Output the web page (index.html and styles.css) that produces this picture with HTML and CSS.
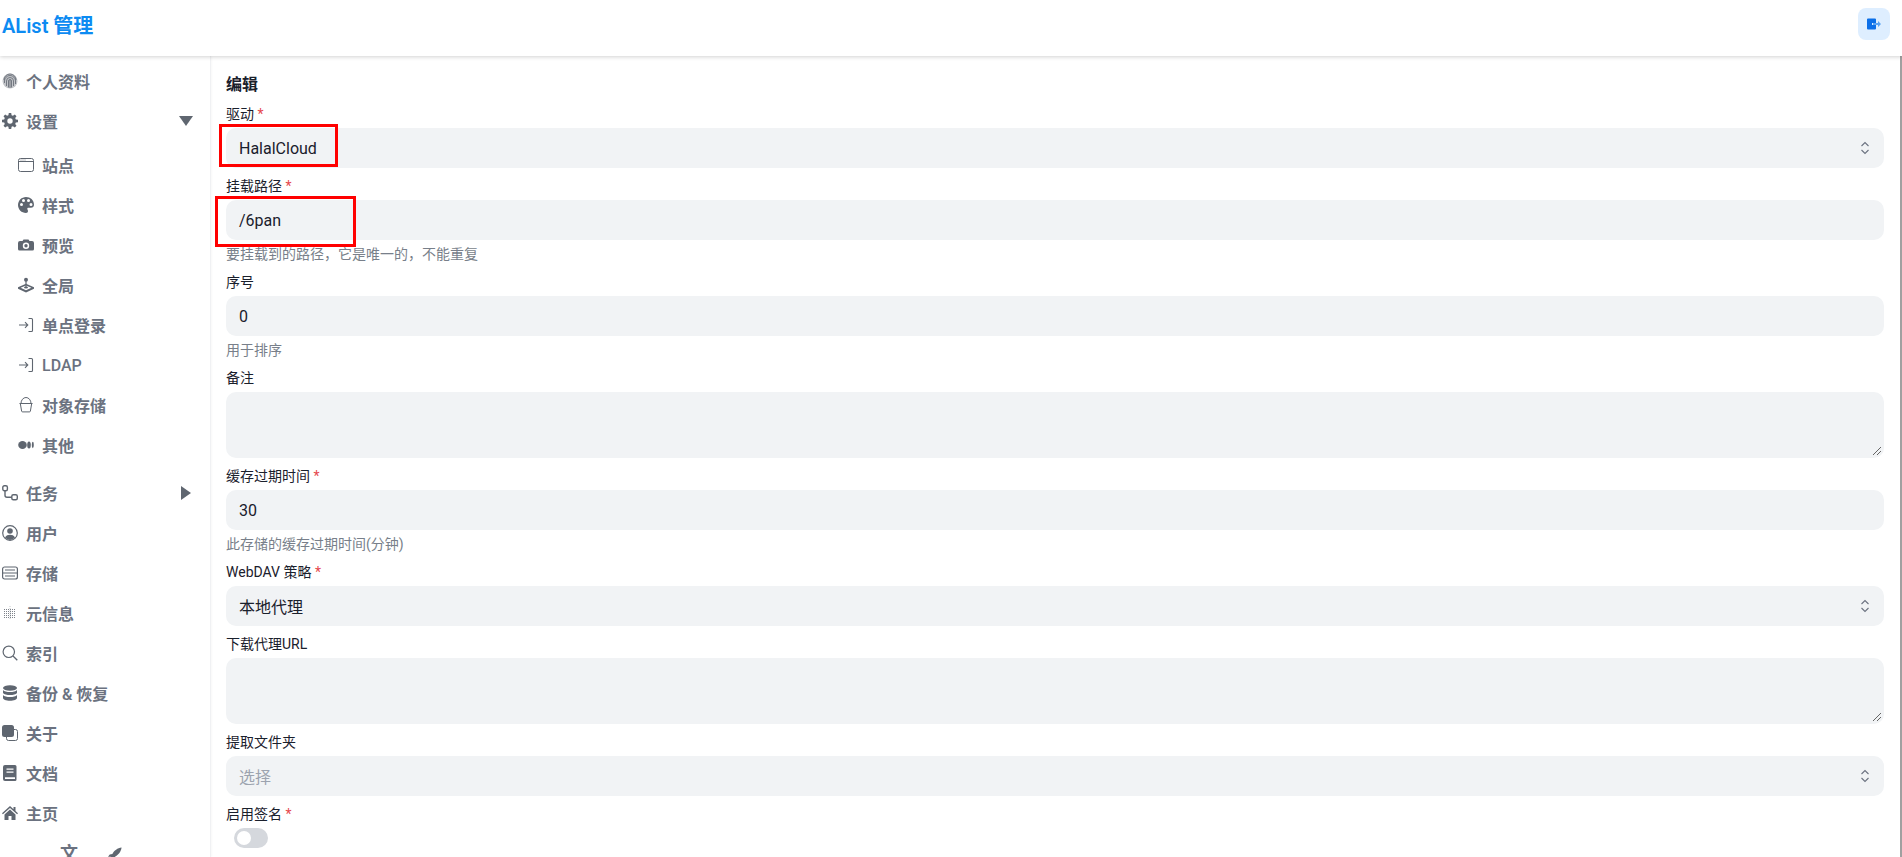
FILE: index.html
```html
<!DOCTYPE html>
<html lang="zh-CN">
<head>
  <meta charset="UTF-8">
  <title>AList 管理</title>
  <link rel="stylesheet" href="styles.css">
</head>
<body>
  <header class="topbar">
    <div class="brand">AList 管理</div>
    <button class="logout" aria-label="退出">
      <svg width="16" height="16" viewBox="0 0 16 16"><path fill="#0b6fe8" d="M2 2.500h7a1 1 0 0 1 1 1V7H6v2h4v3.500a1 1 0 0 1-1 1H2a1 1 0 0 1-1-1v-9a1 1 0 0 1 1-1z"/><path fill="#5ba3f2" d="M7 7h5V5l3 3-3 3V9H7z"/></svg>
    </button>
  </header>

  <div class="layout">
    <!-- Sidebar -->
    <nav class="sidebar">
      <a class="nav-item"><svg class="ico" viewBox="0 0 16 16"><circle cx="8" cy="8" r="7.500" fill="#c3c5c9"/><path d="M2 7a6 6 0 0 1 12 0M2.500 10V8a5.500 5.500 0 0 1 11 0v3M4.500 13V8a3.500 3.500 0 0 1 7 0v5M6.500 14.500V8a1.500 1.500 0 0 1 3 0v6.500M8 7v8" fill="none" stroke="#5f6670" stroke-width=".8"/></svg>个人资料</a>
      <a class="nav-item"><svg class="ico" viewBox="0 0 16 16"><path fill="#5f6670" d="M6.800 0h2.400l.4 2.200 1.300.6L12.800 1.500l1.700 1.700-1.300 1.900.6 1.300 2.200.4v2.400l-2.200.4-.6 1.300 1.300 1.900-1.700 1.700-1.900-1.300-1.300.6-.4 2.200H6.800l-.4-2.200-1.300-.6-1.900 1.300-1.700-1.700 1.300-1.900-.6-1.300L0 9.200V6.800l2.200-.4.6-1.300-1.300-1.900 1.700-1.700 1.900 1.300 1.300-.6zM8 5.300a2.700 2.700 0 1 0 0 5.400 2.700 2.700 0 0 0 0-5.400z"/></svg>设置<svg class="caret" width="14" height="10" viewBox="0 0 14 10"><path fill="#5f6670" d="M0 0h14L7 10z"/></svg></a>

      <div class="subnav">
        <a class="nav-item"><svg class="ico" viewBox="0 0 16 16"><rect x=".5" y="1.500" width="15" height="13" rx="2" fill="none" stroke="#5f6670"/><path d="M1 4.500h14" stroke="#5f6670"/><path d="M2.500 3h1M4.500 3h1M6.500 3h1" stroke="#5f6670" stroke-width=".8"/></svg>站点</a>
        <a class="nav-item"><svg class="ico" viewBox="0 0 16 16"><path fill="#5f6670" fill-rule="evenodd" d="M8 0C3.600 0 0 3.600 0 8s3.600 8 8 8c1.300 0 2-1 2-2 0-.6-.3-1-.5-1.400-.3-.4-.4-.8-.2-1.200.3-.5.800-.6 1.400-.6H13c1.800 0 3-1.300 3-3C16 3 12.400 0 8 0zM3.500 9a1.500 1.500 0 1 1 0-3 1.500 1.500 0 0 1 0 3zm2-4a1.500 1.500 0 1 1 0-3 1.500 1.500 0 0 1 0 3zm5 0a1.500 1.500 0 1 1 0-3 1.500 1.500 0 0 1 0 3zm2.500 4a1.500 1.500 0 1 1 0-3 1.500 1.500 0 0 1 0 3z"/></svg>样式</a>
        <a class="nav-item"><svg class="ico" viewBox="0 0 16 16"><path fill="#5f6670" fill-rule="evenodd" d="M5.500 2.500h5l1 1.500H14a2 2 0 0 1 2 2v6a1.500 1.500 0 0 1-1.500 1.500h-13A1.500 1.500 0 0 1 0 12V6a2 2 0 0 1 2-2h2.500zM8 5.500a3.200 3.200 0 1 0 0 6.400 3.200 3.200 0 0 0 0-6.400zM8 7a1.700 1.700 0 1 1 0 3.400A1.700 1.700 0 0 1 8 7z"/></svg>预览</a>
        <a class="nav-item"><svg class="ico" viewBox="0 0 16 16"><circle cx="8" cy="2.800" r="2" fill="#5f6670"/><path d="M7.400 4h1.200v6H7.400z" fill="#5f6670"/><path fill="#5f6670" fill-rule="evenodd" d="M8 6.800 16 10.300v1.500L8 15.500 0 11.800v-1.500zM8 8.400 2.600 10.800 8 13.300l5.400-2.500z"/><ellipse cx="8" cy="10.500" rx="2" ry="1" fill="#5f6670"/></svg>全局</a>
        <a class="nav-item nav-latin"><svg class="ico" viewBox="0 0 16 16"><path d="M1 8h8.500M7 5.200 9.800 8 7 10.800M10.500 1.500h3a1 1 0 0 1 1 1v11a1 1 0 0 1-1 1h-3" fill="none" stroke="#5f6670" stroke-width="1.100"/></svg><span class="nav-cjk">单点登录</span></a>
        <a class="nav-item nav-latin"><svg class="ico" viewBox="0 0 16 16"><path d="M1 8h8.500M7 5.200 9.800 8 7 10.800M10.500 1.500h3a1 1 0 0 1 1 1v11a1 1 0 0 1-1 1h-3" fill="none" stroke="#5f6670" stroke-width="1.100"/></svg>LDAP</a>
        <a class="nav-item"><svg class="ico" viewBox="0 0 16 16"><path d="M1.500 6.500h13M2.300 6.500 3.600 14a1 1 0 0 0 1 .9h6.800a1 1 0 0 0 1-.9l1.300-7.500M3 6.500a5 6 0 0 1 10 0" fill="none" stroke="#5f6670"/></svg>对象存储</a>
        <a class="nav-item"><svg class="ico" viewBox="0 0 16 16"><ellipse cx="4.500" cy="8" rx="4.300" ry="4" fill="#5f6670"/><ellipse cx="11" cy="8" rx="1.800" ry="3.600" fill="#5f6670"/><ellipse cx="14.800" cy="8" rx="1" ry="3.200" fill="#5f6670"/></svg>其他</a>
      </div>

      <a class="nav-item"><svg class="ico" viewBox="0 0 16 16"><rect x=".8" y=".8" width="4.600" height="5" rx="1.500" fill="none" stroke="#5f6670" stroke-width="1.400"/><rect x="9.800" y="9.800" width="5.500" height="5" rx="1.500" fill="none" stroke="#5f6670" stroke-width="1.400"/><path d="M3 6v4.300a2 2 0 0 0 2 2h4.800" fill="none" stroke="#5f6670" stroke-width="1.400"/></svg>任务<svg class="caret caret-right" width="10" height="14" viewBox="0 0 10 14"><path fill="#5f6670" d="M0 0v14l10-7z"/></svg></a>
      <a class="nav-item"><svg class="ico" viewBox="0 0 16 16"><circle cx="8" cy="8" r="7.300" fill="none" stroke="#5f6670" stroke-width="1.200"/><circle cx="8" cy="6" r="2.800" fill="#5f6670"/><path fill="#5f6670" d="M3 12.500C4 10.500 6 9.800 8 9.800s4 .7 5 2.700A7 7 0 0 1 8 15a7 7 0 0 1-5-2.500z"/></svg>用户</a>
      <a class="nav-item"><svg class="ico" viewBox="0 0 16 16"><rect x=".6" y="2" width="14.800" height="12" rx="2" fill="none" stroke="#5f6670" stroke-width="1.200"/><path d="M1 8h14M3 5h10M3 11h10" stroke="#5f6670" stroke-width="1.100"/></svg>存储</a>
      <a class="nav-item"><svg class="ico" viewBox="0 0 16 16"><path d="M2 4.500h12M2 6.500h12M2 8.500h12M2 10.500h12M2 12.500h12" stroke="#7d828a" stroke-dasharray="1 1"/><path d="M8 1v14" stroke="#c4c7cb" stroke-dasharray="1 1"/></svg>元信息</a>
      <a class="nav-item"><svg class="ico" viewBox="0 0 16 16"><circle cx="6.800" cy="6.800" r="5.700" fill="none" stroke="#5f6670" stroke-width="1.200"/><path d="m11 11 4.300 4.300" stroke="#5f6670" stroke-width="1.300"/></svg>索引</a>
      <a class="nav-item"><svg class="ico" viewBox="0 0 16 16"><ellipse cx="8" cy="3" rx="7" ry="2.800" fill="#5f6670"/><path fill="#5f6670" d="M1 5c1 1.500 4 2 7 2s6-.5 7-2v3c-1 1.500-4 2-7 2S2 9.500 1 8zM1 10c1 1.500 4 2 7 2s6-.5 7-2v3c0 1.500-3 2.800-7 2.800S1 14.500 1 13z"/></svg>备份 &amp; 恢复</a>
      <a class="nav-item"><svg class="ico" viewBox="0 0 16 16"><rect x="4.500" y="4.500" width="11" height="11" rx="2" fill="none" stroke="#5f6670"/><rect x="0" y="0" width="12" height="12" rx="2.500" fill="#5f6670"/></svg>关于</a>
      <a class="nav-item"><svg class="ico" viewBox="0 0 16 16"><path fill="#5f6670" fill-rule="evenodd" d="M3 0h10a1.500 1.500 0 0 1 1.500 1.500v13A1.500 1.500 0 0 1 13 16H3a2 2 0 0 1-2-2V2a2 2 0 0 1 2-2zm1.500 3.500v1.300h7V3.500zm0 3v1.300h7V6.500zM3 12.300v1.800h10v-1.800z"/></svg>文档</a>
      <a class="nav-item"><svg class="ico" viewBox="0 0 16 16"><path fill="#5f6670" d="M8 1 0 8.200l.9 1L8 3l7.100 6.200.9-1-2.500-2.200V2h-2v2.200zM8 4.600l5.500 4.800V15h-4v-4h-3v4h-4V9.400z"/></svg>主页</a>
      <div class="powered">文 <svg width="14" height="14" viewBox="0 0 16 16"><path fill="#5f6670" d="M15.500.5C11 1 7 4 5 8l-3 .5L0 11h3l2 2v3l2.500-2 .5-3c4-2 7-6 7.500-10.500z"/></svg></div>
    </nav>

    <!-- Edit form -->
    <main class="content">
      <h2 class="title">编辑</h2>

      <div class="field">
        <label>驱动 <span class="req">*</span></label>
        <div class="control select">HalalCloud<svg class="updown" width="12" height="16" viewBox="0 0 12 16"><path d="M2.500 6 6 2.500 9.500 6M2.500 10 6 13.500 9.500 10" fill="none" stroke="#6b7280" stroke-width="1.100"/></svg></div>
      </div>
      <div class="field">
        <label>挂载路径 <span class="req">*</span></label>
        <div class="control">/6pan</div>
        <p class="help">要挂载到的路径，它是唯一的，不能重复</p>
      </div>
      <div class="field">
        <label>序号</label>
        <div class="control">0</div>
        <p class="help">用于排序</p>
      </div>
      <div class="field">
        <label>备注</label>
        <div class="control area"><svg class="grip" width="10" height="10" viewBox="0 0 10 10"><path d="M1 9 9 1M5 9 9 5" stroke="#555" stroke-width=".9"/></svg></div>
      </div>
      <div class="field">
        <label>缓存过期时间 <span class="req">*</span></label>
        <div class="control">30</div>
        <p class="help">此存储的缓存过期时间(分钟)</p>
      </div>
      <div class="field">
        <label>WebDAV 策略 <span class="req">*</span></label>
        <div class="control select">本地代理<svg class="updown" width="12" height="16" viewBox="0 0 12 16"><path d="M2.500 6 6 2.500 9.500 6M2.500 10 6 13.500 9.500 10" fill="none" stroke="#6b7280" stroke-width="1.100"/></svg></div>
      </div>
      <div class="field">
        <label>下载代理URL</label>
        <div class="control area"><svg class="grip" width="10" height="10" viewBox="0 0 10 10"><path d="M1 9 9 1M5 9 9 5" stroke="#555" stroke-width=".9"/></svg></div>
      </div>
      <div class="field">
        <label>提取文件夹</label>
        <div class="control select placeholder">选择<svg class="updown" width="12" height="16" viewBox="0 0 12 16"><path d="M2.500 6 6 2.500 9.500 6M2.500 10 6 13.500 9.500 10" fill="none" stroke="#6b7280" stroke-width="1.100"/></svg></div>
      </div>
      <div class="field">
        <label>启用签名 <span class="req">*</span></label>
        <div class="switch"><span class="knob"></span></div>
      </div>
    </main>
  </div>

  <!-- Red marks drawn over the screenshot -->
  <div class="mark mark-driver"></div>
  <div class="mark mark-path"></div>
</body>
</html>
```

FILE: styles.css
```css
* {
  box-sizing: border-box;
}
html, body {
  height: 100%;
}
body {
  margin: 0;
  height: 857px;
  overflow: hidden;
  position: relative;
  background: #fff;
  color: #1a202c;
  font-family: Roboto, "Noto Sans CJK SC", sans-serif;
  font-size: 16px;
}
.topbar {
  height: 56px;
  display: flex;
  align-items: center;
  justify-content: space-between;
  padding: 0 12px 8px 2px;
  background: #fff;
  box-shadow: 0 1px 4px rgba(0,0,0,0.18);
  position: relative;
  z-index: 2;
}
.brand {
  font-size: 20px;
  font-weight: 600;
  color: #0d8bf2;
}
.logout {
  width: 32px;
  height: 32px;
  padding: 0;
  border: 0;
  border-radius: 8px;
  background: #deeeff;
  display: flex;
  align-items: center;
  justify-content: center;
}
.layout {
  display: flex;
  height: 801px;
}
.sidebar {
  width: 211px;
  flex: none;
  padding-top: 5px;
  border-right: 1px solid #f0f1f3;
  box-shadow: 1px 0 2px rgba(0,0,0,0.03);
  color: #6b7280;
  font-weight: 600;
  font-size: 16px;
}
.nav-item {
  height: 40px;
  display: flex;
  align-items: center;
  gap: 8px;
  padding-left: 2px;
  position: relative;
}
.ico {
  width: 16px;
  height: 16px;
  flex: none;
}
.caret {
  position: absolute;
  left: 179px;
  top: 15px;
}
.caret-right {
  left: 181px;
  top: 13px;
}
.subnav {
  padding-top: 4px;
  padding-bottom: 8px;
}
.subnav .nav-item {
  padding-left: 18px;
}
.nav-latin {
  font-weight: 500;
}
.nav-cjk {
  font-weight: 600;
}
.powered {
  padding-left: 60px;
  line-height: 24px;
  margin-top: 9px;
  font-size: 18px;
  display: flex;
  gap: 30px;
  align-items: center;
}
.content {
  flex: 1;
  padding: 16px 16px 0 15px;
  min-width: 0;
  border-right: 2px solid #a0a0a0;
}
.title {
  margin: 0;
  padding-top: 1px;
  font-size: 16px;
  line-height: 23px;
  font-weight: 700;
  color: #1a202c;
}
.field {
  margin-top: 8px;
}
label {
  display: block;
  font-size: 14px;
  line-height: 20px;
  font-weight: 400;
  color: #1a202c;
  margin-bottom: 4px;
}
.req {
  color: #e5484d;
}
.control {
  height: 40px;
  padding: 0 13px;
  background: #f1f3f5;
  border-radius: 10px;
  display: flex;
  align-items: center;
  justify-content: space-between;
  font-size: 16px;
  color: #1a202c;
}
.area {
  height: 66px;
  position: relative;
}
.grip {
  position: absolute;
  right: 2px;
  bottom: 2px;
}
.placeholder {
  color: #9ca3af;
}
.help {
  margin: 4px 0 0;
  font-size: 14px;
  line-height: 20px;
  color: #787f8a;
}
.switch {
  width: 34px;
  height: 20px;
  margin: 0 0 0 8px;
  border-radius: 10px;
  background: #d5d8dd;
  padding: 3px;
}
.knob {
  display: block;
  width: 14px;
  height: 14px;
  border-radius: 50%;
  background: #fff;
}
.mark {
  position: absolute;
  border: 3px solid #f00;
}
.mark-driver {
  left: 219px;
  top: 124px;
  width: 119px;
  height: 43px;
}
.mark-path {
  left: 215px;
  top: 196px;
  width: 141px;
  height: 51px;
}
```
